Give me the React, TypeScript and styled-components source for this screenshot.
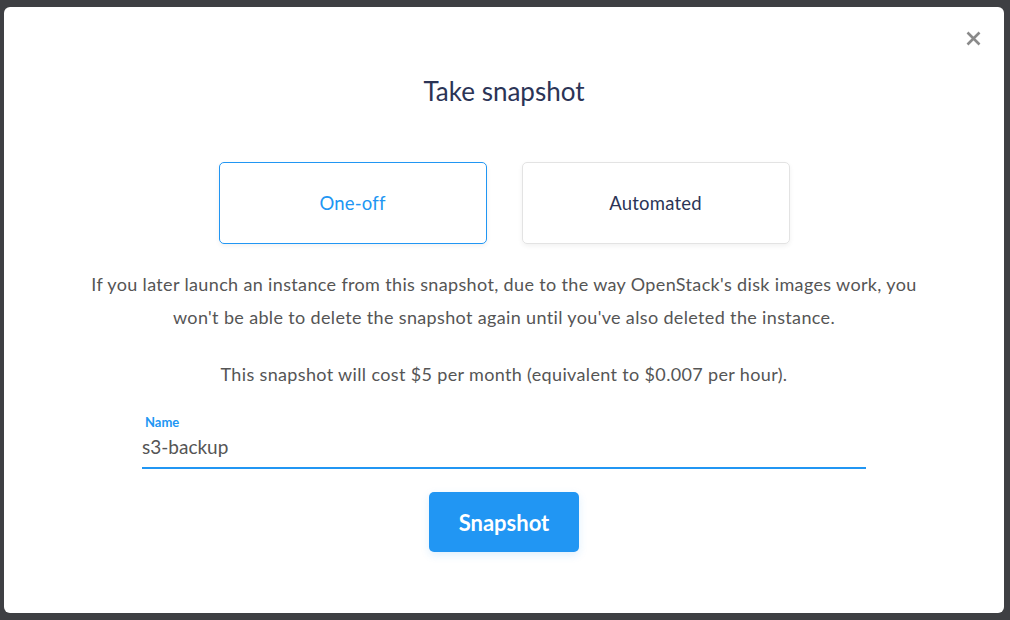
import React from "react";
import styled, { createGlobalStyle } from "styled-components";

const Global = createGlobalStyle`
  html, body { margin: 0; padding: 0; background: #3e3f43; }
  body { font-family: Lato, "Open Sans", sans-serif; }
  * { box-sizing: border-box; }
`;

const Page = styled.div`
  width: 1010px;
  height: 620px;
  padding: 7px 6px 7px 4px;
  position: relative;
  overflow: hidden;
`;

const Modal = styled.div`
  position: relative;
  width: 1000px;
  height: 606px;
  background: #fff;
  border-radius: 6px;
  display: flex;
  flex-direction: column;
  align-items: center;
  padding-top: 67px;
`;

const Close = styled.button`
  position: absolute;
  top: 18px;
  right: 18px;
  width: 26px;
  height: 26px;
  border: 0;
  background: transparent;
  padding: 0;
  display: flex;
  align-items: center;
  justify-content: center;
`;

const Title = styled.h2`
  margin: 0;
  font-family: Lato, sans-serif;
  font-weight: 400;
  font-size: 26px;
  line-height: 34px;
  color: #2b3456;
`;

const Options = styled.div`
  display: flex;
  gap: 35px;
  margin-top: 54px;
`;

const Option = styled.div<{ $active?: boolean }>`
  width: 268px;
  height: 82px;
  border-radius: 5px;
  border: 1px solid ${(p) => (p.$active ? "#2196f3" : "#e3e3e3")};
  box-shadow: 0 2px 5px rgba(0, 0, 0, 0.06);
  display: flex;
  align-items: center;
  justify-content: center;
  font-size: 18.5px;
  letter-spacing: 0.2px;
  color: ${(p) => (p.$active ? "#2196f3" : "#2b3456")};
`;

const Para = styled.p<{ $top: number }>`
  margin: ${(p) => p.$top}px 0 0;
  width: 850px;
  text-align: center;
  font-size: 18px;
  letter-spacing: 0.35px;
  line-height: 33px;
  color: #555;
`;

const Field = styled.div`
  width: 724px;
  margin-top: 23px;
  display: flex;
  flex-direction: column;
`;

const Label = styled.label`
  font-size: 13px;
  line-height: 16px;
  font-weight: 700;
  color: #2196f3;
  padding-left: 3px;
`;

const Input = styled.input`
  border: 0;
  outline: none;
  border-bottom: 2px solid #2196f3;
  font-family: Lato, sans-serif;
  font-size: 19px;
  line-height: 26px;
  height: 39px;
  padding: 3px 0 8px;
  color: #555;
  background: transparent;
`;

const SubmitButton = styled.button`
  margin-top: 23px;
  width: 150px;
  height: 60px;
  border: 0;
  border-radius: 5px;
  background: #2196f3;
  color: #fff;
  font-family: Lato, sans-serif;
  font-size: 22px;
  font-weight: 700;
  box-shadow: 0 3px 8px rgba(33, 150, 243, 0.15);
`;

export default function App() {
  return (
    <>
      <Global />
      <Page>
        <Modal>
          <Close aria-label="Close">
            <svg width="15" height="15" viewBox="0 0 15 15">
              <path d="M1.5 1.5 L13.5 13.5 M13.5 1.5 L1.5 13.5" stroke="#8a8a8a" strokeWidth="2.6" strokeLinecap="butt" />
            </svg>
          </Close>
          <Title>Take snapshot</Title>
          <Options>
            <Option $active>One-off</Option>
            <Option>Automated</Option>
          </Options>
          <Para $top={24}>
            If you later launch an instance from this snapshot, due to the way OpenStack's disk images work, you
            won't be able to delete the snapshot again until you've also deleted the instance.
          </Para>
          <Para $top={24}>This snapshot will cost $5 per month (equivalent to $0.007 per hour).</Para>
          <Field>
            <Label htmlFor="snap-name">Name</Label>
            <Input id="snap-name" defaultValue="s3-backup" />
          </Field>
          <SubmitButton>Snapshot</SubmitButton>
        </Modal>
      </Page>
    </>
  );
}
